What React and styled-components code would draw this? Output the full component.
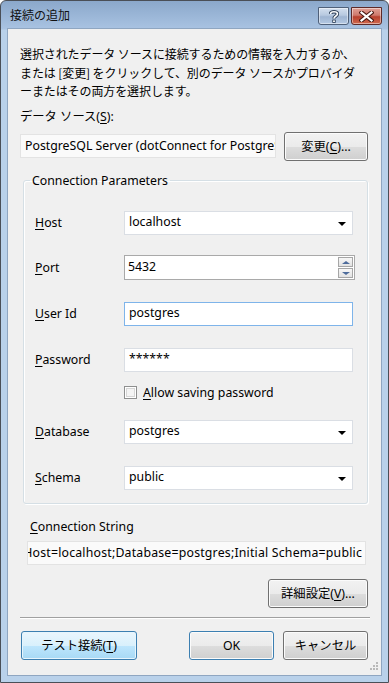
import React from 'react';
import styled, { createGlobalStyle, css } from 'styled-components';

const GlobalStyle = createGlobalStyle`
    html, body {
        margin: 0;
        padding: 0;
        background: #ffffff;
    }
    body {
        font-family: "Noto Sans", "Noto Sans CJK JP", sans-serif;
        font-size: 12.3px;
        color: #000;
    }
    * {
        box-sizing: border-box;
    }
`

const Window = styled.div`
    width: 389px;
    height: 683px;
    border: 1px solid #4a4f57;
    border-radius: 6px 6px 0 0;
    background: linear-gradient(#8ba8cb 0px, #a9c3e2 28px, #b9d1ea 29px, #b9d1ea 100%);
    display: flex;
    flex-direction: column;
    overflow: hidden;
`

const TitleBar = styled.div`
    height: 27px;
    display: flex;
    align-items: flex-start;
    justify-content: space-between;
    padding: 0 6px 0 9px;
`

const Title = styled.div`
    font-family: "Noto Sans CJK JP", sans-serif;
    font-size: 12px;
    line-height: 27px;
    color: #111;
`

const CaptionButtons = styled.div`
    display: flex;
    gap: 2px;
    margin-top: 6px;
`

const CaptionButton = styled.div`
    width: 31px;
    height: 18px;
    border: 1px solid ${p => p.$close ? '#5e2a28' : '#4f6079'};
    border-radius: 0 0 3px 3px;
    display: flex;
    align-items: center;
    justify-content: center;
    box-shadow: inset 0 0 0 1px rgba(255, 255, 255, 0.45);
    background: ${p => p.$close
        ? 'linear-gradient(#e0a197 0%, #cf7a6d 45%, #b8402e 55%, #d06a4f 100%)'
        : 'linear-gradient(#d3dfee 0%, #b7c9e0 45%, #9fb5d2 55%, #b4c9e3 100%)'};
`

const Client = styled.div`
    flex: 1;
    margin: 0 6px 6px 6px;
    border: 1px solid #8fa6c1;
    background: #f0f0f0;
    padding: 16px 13px 0 12px;
    position: relative;
    display: flex;
    flex-direction: column;
`

const Description = styled.p`
    margin: 0;
    font-family: "Noto Sans CJK JP", sans-serif;
    font-size: 12px;
    line-height: 18.5px;
    white-space: nowrap;
    letter-spacing: -0.1px;
`

const Caption = styled.div`
    line-height: 18px;
    margin: ${p => p.$margin || '0'};
    white-space: nowrap;
`

const Key = styled.span`
    text-decoration: underline;
    text-underline-offset: 2px;
`

const SourceRow = styled.div`
    display: flex;
    align-items: center;
    gap: 8px;
    margin-top: 6px;
`

const ReadOnlyBox = styled.div`
    width: 256px;
    height: 24px;
    background: #fafafa;
    border: 1px solid #e3e3e3;
    padding: 0 4px;
    line-height: 22px;
    overflow: hidden;
    white-space: nowrap;
    display: flex;
    justify-content: ${p => p.$end ? 'flex-end' : 'flex-start'};
    ${p => p.$wide && css`
        width: auto;
        margin: 5px 2px 0 7px;
        padding: 0 3px;
        letter-spacing: 0.2px;
    `}
`

const Button = styled.button`
    font-family: "Noto Sans", "Noto Sans CJK JP", sans-serif;
    font-size: 12.3px;
    color: #000;
    width: ${p => p.$width}px;
    height: 29px;
    padding: 0;
    border: 1px solid ${p => (p.$hot || p.$default) ? '#3c7fb1' : '#707070'};
    border-radius: 3px;
    box-shadow: inset 0 0 0 1px ${p => p.$hot ? '#e6f5fd' : '#fbfbfb'};
    background: ${p => p.$hot
        ? 'linear-gradient(#eaf6fd 0%, #d9f0fc 50%, #bee6fd 51%, #a7d9f5 100%)'
        : 'linear-gradient(#f2f2f2 0%, #ebebeb 50%, #dddddd 51%, #cfcfcf 100%)'};
    flex: none;
`

const Group = styled.fieldset`
    margin: 11px 2px 0 3px;
    padding: 11px 12px 2px 11px;
    border: 1px solid #d5dfe5;
    border-radius: 3px;
    box-shadow: inset 1px 1px 0 #fff, 1px 1px 0 #fff;
`

const Legend = styled.legend`
    margin-left: -5px;
    padding: 0 2px;
    line-height: 18px;
`

const FieldRow = styled.div`
    display: flex;
    align-items: center;
    height: ${p => p.$height || 46}px;
    margin-top: ${p => p.$top || 0}px;
`

const Label = styled.label`
    width: 89px;
    flex: none;
    white-space: nowrap;
`

const Input = styled.div`
    position: relative;
    width: ${p => p.$width || 229}px;
    height: ${p => p.$h || 24}px;
    background: #fff;
    border: 1px solid ${p => p.$border || '#dadee4'};
    padding: 0 ${p => p.$pad || 4}px;
    line-height: ${p => (p.$h || 24) - 4}px;
    white-space: nowrap;
    display: flex;
    align-items: flex-start;
    justify-content: space-between;
`

const DropArrow = styled.span`
    width: 0;
    height: 0;
    border-left: 4px solid transparent;
    border-right: 4px solid transparent;
    border-top: 4px solid #000;
    margin: 10px 2px 0 0;
`

const Spinner = styled.div`
    display: flex;
    flex-direction: column;
    gap: 1px;
    margin: 1px -2px 0 0;
`

const SpinButton = styled.div`
    width: 15px;
    height: 10px;
    border: 1px solid #a6a6a6;
    background: linear-gradient(#f7f7f7, #e2e2e2);
    display: flex;
    align-items: center;
    justify-content: center;
`

const SpinArrow = styled.span`
    width: 0;
    height: 0;
    border-left: 4px solid transparent;
    border-right: 4px solid transparent;
    ${p => p.$up
        ? css`border-bottom: 3px solid #4d6b9b;`
        : css`border-top: 3px solid #4d6b9b;`}
`

const CheckRow = styled.div`
    display: flex;
    align-items: center;
    gap: 6px;
    height: 20px;
    padding-left: 89px;
`

const CheckBox = styled.span`
    width: 13px;
    height: 13px;
    border: 1px solid #8e8f8f;
    background: #f4f4f4;
    box-shadow: inset 0 0 0 1px #fff, inset 0 0 0 2px #d6d6d6;
`

const RightRow = styled.div`
    display: flex;
    justify-content: flex-end;
    margin-top: 14px;
`

const Separator = styled.hr`
    margin: 9px -2px 0 0;
    border: none;
    border-top: 1px solid #a0a0a0;
    border-bottom: 1px solid #fff;
`

const BottomRow = styled.div`
    display: flex;
    align-items: center;
    gap: 9px;
    margin: 12px 0 0 1px;
`

const Spacer = styled.div`
    flex: 1;
`

const Grip = styled.svg`
    position: absolute;
    right: 2px;
    bottom: 2px;
`

const HelpGlyph = () => (
    <svg width="10" height="13" viewBox="0 0 10 13">
        <path d="M1.5 4 C1.5 1 8.5 1 8.5 4 C8.5 6 5 6 5 8.5" fill="none" stroke="#2b3d55" strokeWidth="3.4" />
        <path d="M1.5 4 C1.5 1 8.5 1 8.5 4 C8.5 6 5 6 5 8.5" fill="none" stroke="#fff" strokeWidth="1.6" />
        <rect x="3.3" y="9.6" width="3.4" height="3.2" fill="#2b3d55" />
        <rect x="4.1" y="10.4" width="1.8" height="1.6" fill="#fff" />
    </svg>
)

const CloseGlyph = () => (
    <svg width="15" height="11" viewBox="0 0 15 11">
        <path d="M2.5 1.5 L12.5 9.5 M12.5 1.5 L2.5 9.5" stroke="#4a1a14" strokeWidth="4.2" strokeLinecap="square" />
        <path d="M2.5 1.5 L12.5 9.5 M12.5 1.5 L2.5 9.5" stroke="#fff" strokeWidth="2.2" strokeLinecap="square" />
    </svg>
)

const fields = [
    { key: 'H', rest: 'ost', value: 'localhost', kind: 'combo', height: 44 },
    { key: 'P', rest: 'ort', value: '5432', kind: 'spin' },
    { key: 'U', rest: 'ser Id', value: 'postgres', kind: 'text', border: '#7eb4ea' },
    { key: 'P', rest: 'assword', value: '******', kind: 'text' },
]

const lowerFields = [
    { key: 'D', rest: 'atabase', value: 'postgres', top: 6 },
    { key: 'S', rest: 'chema', value: 'public' },
]

const Field = ({ field }) => (
    <FieldRow $height={field.height} $top={field.top}>
        <Label><Key>{field.key}</Key>{field.rest}</Label>
        {field.kind === 'spin' ? (
            <Input $width={231} $h={25} $border="#a9a9a9" $pad={3}>
                <span>{field.value}</span>
                <Spinner>
                    <SpinButton><SpinArrow $up /></SpinButton>
                    <SpinButton><SpinArrow /></SpinButton>
                </Spinner>
            </Input>
        ) : (
            <Input $border={field.border}>
                <span>{field.value}</span>
                {field.kind !== 'text' && <DropArrow />}
            </Input>
        )}
    </FieldRow>
)

const App = () => {
    return (
        <>
            <GlobalStyle />
            <Window>
                <TitleBar>
                    <Title>接続の追加</Title>
                    <CaptionButtons>
                        <CaptionButton><HelpGlyph /></CaptionButton>
                        <CaptionButton $close><CloseGlyph /></CaptionButton>
                    </CaptionButtons>
                </TitleBar>
                <Client>
                    <Description>
                        選択されたデータ ソースに接続するための情報を入力するか、<br />
                        または [変更] をクリックして、別のデータ ソースかプロバイダ<br />
                        ーまたはその両方を選択します。
                    </Description>
                    <Caption $margin="7px 0 0 0">データ ソース(<Key>S</Key>):</Caption>
                    <SourceRow>
                        <ReadOnlyBox>PostgreSQL Server (dotConnect for PostgreSQL)</ReadOnlyBox>
                        <Button $width={84}>変更(<Key>C</Key>)...</Button>
                    </SourceRow>
                    <Group>
                        <Legend>Connection Parameters</Legend>
                        {fields.map((f, i) => <Field key={i} field={f} />)}
                        <CheckRow>
                            <CheckBox />
                            <span><Key>A</Key>llow saving password</span>
                        </CheckRow>
                        {lowerFields.map((f, i) => <Field key={i} field={{ ...f, kind: 'combo' }} />)}
                    </Group>
                    <Caption $margin="14px 0 0 10px"><Key>C</Key>onnection String</Caption>
                    <ReadOnlyBox $wide $end>
                        <span>User Id=postgres;Host=localhost;Database=postgres;Initial Schema=public</span>
                    </ReadOnlyBox>
                    <RightRow>
                        <Button $width={100}>詳細設定(<Key>V</Key>)...</Button>
                    </RightRow>
                    <Separator />
                    <BottomRow>
                        <Button $width={116} $hot>テスト接続(<Key>T</Key>)</Button>
                        <Spacer />
                        <Button $width={85} $default>OK</Button>
                        <Button $width={85}>キャンセル</Button>
                    </BottomRow>
                    <Grip width="12" height="12" viewBox="0 0 12 12">
                        {[[9, 1], [6, 4], [9, 4], [3, 7], [6, 7], [9, 7]].map(([x, y], i) => (
                            <rect key={i} x={x} y={y} width="2" height="2" fill="#b8b8b8" />
                        ))}
                    </Grip>
                </Client>
            </Window>
        </>
    );
};

export default App;
